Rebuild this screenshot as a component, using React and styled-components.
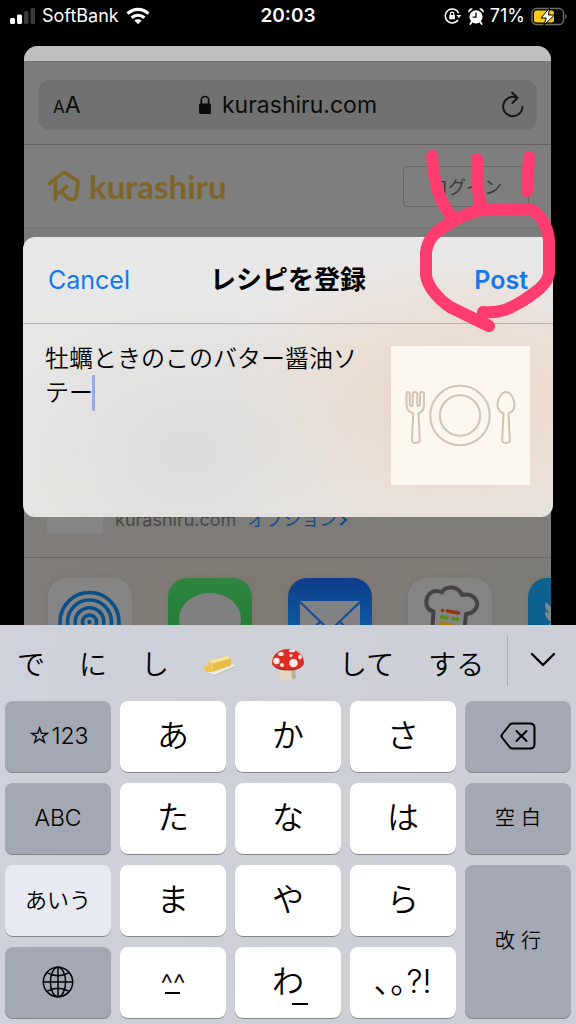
import React from "react";
import styled, { createGlobalStyle } from "styled-components";

const GlobalStyle = createGlobalStyle`
  * { box-sizing: border-box; }
  body { margin: 0; background: #000; }
  button, textarea { font: inherit; color: inherit; border: 0; background: none; padding: 0; margin: 0; }
`;

const Screen = styled.div`
  display: flex;
  flex-direction: column;
  height: 100vh;
  overflow: hidden;
  background: #000;
  color: #000;
  font-family: Inter, "Noto Sans CJK JP", sans-serif;
`;

/* Status bar */
const StatusBar = styled.header`
  display: grid;
  grid-template-columns: 1fr auto 1fr;
  align-items: center;
  height: 32px;
  padding: 0 8px;
  color: #fff;
  font-size: 18px;
  line-height: 32px;
`;
const StatusGroup = styled.div`
  display: flex;
  align-items: center;
  gap: ${(p) => p.$gap}px;
  justify-content: ${(p) => (p.$end ? "flex-end" : "flex-start")};
`;
const Clock = styled.time`
  font-weight: 600;
  font-size: 19px;
`;

/* Page behind the dialog */
const Stage = styled.main`
  display: grid;
  flex: 1 1 0;
  min-height: 0;
  overflow: hidden;
`;
const Sheet = styled.section`
  grid-area: 1 / 1;
  min-height: 0;
  min-width: 0;
  overflow: hidden;
  margin: 14px 25px 0 24px;
  border-radius: 14px 14px 0 0;
  background: #7e7e7e;
`;
const SheetTop = styled.div`
  height: 16px;
  background: #bfc0be;
  border-bottom: 1px solid #747474;
`;
const BrowserBar = styled.div`
  padding: 18px 14px 14px;
  background: #7c7c7c;
  border-bottom: 1px solid #626262;
`;
const AddressBox = styled.div`
  display: grid;
  grid-template-columns: 1fr auto 1fr;
  align-items: center;
  height: 50px;
  padding: 0 11px 0 15px;
  border-radius: 12px;
  background: #717171;
  font-size: 23px;
  color: #0c0c0c;
`;
const TextSize = styled.button`
  justify-self: start;
  display: flex;
  align-items: baseline;
  font-size: 23px;
`;
const SmallA = styled.span`
  font-size: 17px;
`;
const Address = styled.span`
  display: flex;
  align-items: center;
  gap: 10px;
  margin-right: 4px;
`;
const Reload = styled.button`
  justify-self: end;
  display: flex;
`;
const SiteHeader = styled.div`
  display: flex;
  align-items: center;
  justify-content: space-between;
  height: 83px;
  padding: 0 22px 0 23px;
  border-bottom: 1px solid #727272;
`;
const Logo = styled.a`
  display: flex;
  align-items: center;
  gap: 8px;
  color: #7d6628;
  text-decoration: none;
  font-family: Lato, sans-serif;
  font-weight: 700;
  font-size: 33px;
  line-height: 40px;
`;
const LoginButton = styled.button`
  && {
    width: 126px;
    height: 41px;
    border: 1px solid #686564;
    border-radius: 4px;
    color: #353535;
    font-size: 18px;
    font-weight: 350;
  }
`;
const SharePreview = styled.div`
  display: flex;
  align-items: flex-end;
  gap: 12px;
  padding: 250px 23px 23px;
  background: linear-gradient(#7b7b7b 200px, #807d79);
  border-bottom: 1px solid #676765;
  font-size: 18px;
  line-height: 28px;
  color: #484644;
`;
const PreviewIcon = styled.div`
  width: 56px;
  height: 56px;
  border-radius: 4px;
  background: #868583;
`;
const ShareSite = styled.span`
  display: flex;
  gap: 11px;
`;
const OptionsLink = styled.a`
  display: flex;
  align-items: center;
  gap: 2px;
  color: #124a8c;
  text-decoration: none;
`;
const AppRow = styled.div`
  display: flex;
  gap: 36px;
  padding: 20px 24px;
  background: linear-gradient(100deg, #807c78, #807a74 45%, #7d7c77);
`;
const AppTile = styled.button`
  && {
    flex: none;
    width: 84px;
    height: 84px;
    border-radius: 19px;
    overflow: hidden;
    background: ${(p) => p.$bg};
    box-shadow: 0 0 10px rgba(0, 0, 0, 0.06);
  }
  svg { display: block; }
`;

/* Dialog */
const Dialog = styled.section`
  grid-area: 1 / 1;
  align-self: start;
  position: relative;
  margin: 205px 23px 0;
  border-radius: 12px;
  background:
    radial-gradient(ellipse 200px 160px at 165px 215px, #dcdcda 0%, rgba(221, 221, 219, 0) 100%),
    radial-gradient(ellipse 250px 150px at 430px 165px, #ead8ca 0%, #ebdcd1 40%, rgba(233, 228, 224, 0) 100%),
    linear-gradient(#e8e8e9, #e8e6e2);
`;
const DialogHeader = styled.div`
  display: grid;
  grid-template-columns: 1fr auto 1fr;
  align-items: center;
  height: 87px;
  padding: 0 25px;
  border-bottom: 1px solid #b2b0af;
`;
const Title = styled.h1`
  margin: 0;
  font-size: 26px;
  font-weight: 600;
  line-height: 36px;
`;
const DialogAction = styled.button`
  && {
    justify-self: ${(p) => (p.$end ? "end" : "start")};
    color: #1478ea;
    font-size: 25px;
    font-weight: ${(p) => (p.$end ? 600 : 400)};
    line-height: 36px;
  }
`;
const DialogBody = styled.div`
  display: flex;
  justify-content: space-between;
  padding: 22px 23px 32px 22px;
`;
const Field = styled.label`
  position: relative;
  display: block;
`;
const RecipeText = styled.textarea`
  && {
    display: block;
    width: 322px;
    height: 120px;
    margin-top: -6px;
    resize: none;
    outline: none;
    overflow: hidden;
    font-family: "Noto Sans CJK JP", sans-serif;
    font-size: 24px;
    font-weight: 350;
    line-height: 34px;
  }
`;
const Caret = styled.span`
  position: absolute;
  left: 47px;
  top: 29px;
  width: 3px;
  height: 36px;
  border-radius: 1px;
  background: #9ba9e6;
`;
const Thumb = styled.div`
  width: 139px;
  height: 139px;
  background: #fcf8f0;
`;
const Marker = styled.svg`
  position: absolute;
  top: -97px;
  right: -7px;
  pointer-events: none;
`;

/* Keyboard */
const Keyboard = styled.section`
  flex: none;
  padding: 0 5px 5px;
  background: linear-gradient(100deg, #cfd1dc, #cdd0d6 40%, #cccfd8);
`;
const SuggestionBar = styled.div`
  display: flex;
  align-items: center;
  justify-content: space-between;
  height: 76px;
`;
const Suggestions = styled.div`
  display: flex;
  flex: 1 1 0;
  min-width: 0;
  align-items: center;
  gap: 34px;
  padding-left: 12px;
`;
const Suggestion = styled.button`
  && {
    display: flex;
    flex: none;
    font-family: "Noto Sans CJK JP", sans-serif;
    font-size: 28px;
    font-weight: 350;
    line-height: 40px;
  }
`;
const Expand = styled.button`
  && {
    display: flex;
    flex: none;
    justify-content: center;
    align-items: center;
    width: 64px;
    height: 51px;
    margin-bottom: 6px;
    padding-left: 6px;
    border-left: 1px solid #a9adb6;
  }
`;
const Keys = styled.div`
  display: grid;
  grid-template-columns: repeat(5, 1fr);
  grid-auto-rows: 72px;
  gap: 10px 9px;
`;
const tones = { white: "#fff", dark: "#a3a8b4", light: "#e7eaf0" };
const Key = styled.button`
  && {
    position: relative;
    display: flex;
    align-items: center;
    justify-content: center;
    gap: ${(p) => p.$gap || 0}px;
    grid-row: ${(p) => (p.$tall ? "span 2" : "auto")};
    border-radius: 8px;
    background: ${(p) => tones[p.$tone || "white"]};
    box-shadow: inset 0 -1px 0 #85878d;
    font-size: ${(p) => p.$size || 32}px;
    font-weight: 350;
    line-height: 36px;
    padding-bottom: 2px;
  }
`;
const Face = styled.span`
  display: flex;
  flex-direction: column;
  align-items: center;
  font-size: 28px;
  line-height: 28px;
  &::after {
    content: "";
    width: 15px;
    border-bottom: 2px solid #000;
    margin-top: -6px;
  }
`;
const Kana = styled.span`
  position: relative;
  &::after {
    content: "";
    position: absolute;
    right: -4px;
    bottom: -5px;
    width: 16px;
    border-bottom: 2px solid #000;
  }
`;

function Signal() {
  return (
    <svg width="27" height="18" viewBox="0 0 27 18">
      <rect x="2" y="11" width="5" height="6" rx="1.5" fill="#fff" />
      <rect x="9" y="7.500" width="5" height="9.500" rx="1.500" fill="#fff" />
      <rect x="16" y="4" width="4.500" height="13" rx="1.500" fill="#3a3a3a" />
      <rect x="22.500" y="1" width="4.500" height="16" rx="1.500" fill="#3a3a3a" />
    </svg>
  );
}
function Wifi() {
  return (
    <svg width="24" height="18" viewBox="0 0 24 18" fill="none" stroke="#fff" strokeWidth="3.2">
      <path d="M1.500 6.600C7.500 .9 16.500 .9 22.500 6.600" />
      <path d="M5.600 10.800C9.300 7.400 14.700 7.400 18.400 10.800" />
      <path d="M12 17.200l-3.600-3.700c2-1.800 5.200-1.800 7.200 0z" fill="#fff" stroke="none" />
    </svg>
  );
}
function RotationLock() {
  return (
    <svg width="18" height="16" viewBox="0 0 18 16" fill="none" stroke="#fff" strokeWidth="1.500">
      <path d="M14.700 5.200A7 7 0 1 0 14 12" />
      <path d="M12.500 7h4.700l-2.300 3.200z" fill="#fff" stroke="none" />
      <rect x="5.300" y="7" width="5.600" height="4.300" rx=".6" fill="#fff" stroke="none" />
      <path d="M6.500 7V5.700a1.600 1.600 0 0 1 3.200 0V7" strokeWidth="1.200" />
    </svg>
  );
}
function Alarm() {
  return (
    <svg width="16" height="17" viewBox="0 0 16 17">
      <circle cx="8" cy="8.800" r="6.600" fill="#fff" />
      <path d="M.6 4.700A3 3 0 0 1 4.800.8zM15.400 4.700A3 3 0 0 0 11.200.8z" fill="#fff" />
      <path d="M3.600 14l-1.300 2M12.400 14l1.300 2" stroke="#fff" strokeWidth="1.800" strokeLinecap="round" />
      <path d="M8 4.500v4.600H4.600" fill="none" stroke="#000" strokeWidth="1.300" />
    </svg>
  );
}
function Battery() {
  return (
    <svg width="37" height="19" viewBox="0 0 37 19">
      <rect x="1" y="1.500" width="31.500" height="16" rx="4.500" fill="none" stroke="#6b6b6b" strokeWidth="1.500" />
      <path d="M34.300 7v5c1.900-.6 1.900-4.400 0-5z" fill="#6b6b6b" />
      <rect x="3" y="3.500" width="20" height="12" rx="2.500" fill="#f7cb1b" />
      <path d="M18.500 1L10 11h5.300l-2.500 7.300L23.500 8h-6z" fill="#fff" stroke="#000" strokeWidth="1" />
    </svg>
  );
}
function HouseLogo() {
  return (
    <svg width="34" height="32" viewBox="0 0 34 32" fill="none" stroke="#7d6628" strokeWidth="3.600" strokeLinecap="round" strokeLinejoin="round">
      <path d="M2.500 13.500L15.500 3.300Q17 2.200 18.500 3.300L30 10.500Q31.300 11.500 31 13L29.300 25.500Q28.500 29.500 25 29.500Q21 29.500 18.500 26L14.500 21.500L19.500 16.500M8.500 12V29.500M8.500 24.500L14.500 21.500" />
    </svg>
  );
}
function AirDropArt() {
  return (
    <svg width="84" height="84" viewBox="0 0 84 84" fill="none" stroke="#075089" strokeWidth="3.600">
      <circle cx="41.500" cy="44" r="29.500" />
      <circle cx="41.500" cy="44" r="22" />
      <circle cx="41.500" cy="44" r="14.300" />
      <circle cx="41.500" cy="44" r="7" />
      <circle cx="41.500" cy="44" r="2.200" fill="#075089" stroke="none" />
    </svg>
  );
}
function BubbleArt() {
  return (
    <svg width="84" height="84" viewBox="0 0 84 84">
      <ellipse cx="42" cy="41" rx="31" ry="26" fill="#807f81" />
    </svg>
  );
}
function MailArt() {
  return (
    <svg width="84" height="84" viewBox="0 0 84 84">
      <rect x="12" y="23" width="60" height="40" fill="#828284" />
      <path d="M12 24L38 49Q42 53 46 49L72 24M13 62L33 43M71 62L51 43" fill="none" stroke="#154e92" strokeWidth="2.200" />
    </svg>
  );
}
function ChefArt() {
  return (
    <svg width="84" height="84" viewBox="0 0 84 84" fill="none" strokeLinecap="round">
      <path d="M24 56L25.500 33.500C14 31 17 12.500 29 13Q32 13 34 14.500C37 7.500 50 7.500 54 17C66 14.500 73 25 67 31.500Q64 35.500 58 36L56 56" stroke="#484144" strokeWidth="4" strokeLinejoin="round" />
      <path d="M34.500 32.500h.2M39.500 33L50.500 35" stroke="#93330f" strokeWidth="3.500" />
      <path d="M33.500 39L39 40M44.500 40.500L50 41.500" stroke="#58891f" strokeWidth="3.500" />
      <path d="M32.500 45.500L44 47" stroke="#aa7c16" strokeWidth="3.500" />
    </svg>
  );
}
function BirdArt() {
  return (
    <svg width="84" height="84" viewBox="0 0 84 84">
      <path d="M18 24C25 32 33 36 42 36C40 25 52 18 60 26L68 23L63 30L70 29L63 35C63 55 42 69 16 59Q27 58 31 54Q22 52 21 45H25Q17 41 17 34L22 35Q15 30 18 24Z" fill="#80878b" />
    </svg>
  );
}
function PlateArt() {
  return (
    <svg width="139" height="139" viewBox="0 0 139 139" fill="none" stroke="#d2c3b3" strokeWidth="2" strokeLinejoin="round">
      <circle cx="69" cy="69.500" r="29.800" />
      <circle cx="69" cy="69.500" r="20.200" />
      <path d="M15.500 48Q15.500 46 17 46T18.800 48V58Q18.800 60 20.300 60T21.800 58V48Q21.800 46 24 46T26.200 48V58Q26.200 60 27.500 60T29 58V48Q29 46 31 46T33 48V60Q33 65 27.500 67.500L28.700 94Q28.700 97 24.800 97T21 94L22.200 67.500Q15.500 65 15.500 59Z" />
      <path d="M115 46C120 46 123.500 54 123.500 59Q123.500 65 117.500 67.500L118.800 94Q118.800 97 115 97T111.200 94L112.500 67.500Q106.500 65 106.500 59C106.500 54 110 46 115 46Z" />
    </svg>
  );
}
function Butter() {
  return (
    <svg width="34" height="34" viewBox="0 0 34 34">
      <path d="M3 26L27 17L33 19.500L11 29Z" fill="#ececee" />
      <path d="M3 26L11 29L33 19.500V20.500L11 30.500Z" fill="#c0c1c4" />
      <path d="M5.500 15L23.700 10L28 12.300L10 17.500Z" fill="#fbe58c" />
      <path d="M5.500 15L10 17.500V26L5.500 23.500Z" fill="#f0c855" />
      <path d="M10 17.500L28 12.300V19.500L10 26Z" fill="#e8bd48" />
      <path d="M0 20.500L5.500 20L10 26L3 26Z" fill="#f1c63f" />
    </svg>
  );
}
function Mushroom() {
  return (
    <svg width="34" height="34" viewBox="0 0 34 34">
      <path d="M10 22L8.500 31.500Q10 34 17 34T25 31.500L24 22Z" fill="#e3d6c2" />
      <path d="M20 22L21 33.500Q24 33 25 31.500L24 22Z" fill="#bfae95" />
      <path d="M1 17C1 8 9 3 17 3S33 8 33 17C33 21 27 23.500 17 23.500S1 21 1 17Z" fill="#dd2e26" />
      <path d="M3 20.500Q17 26 31 20.500Q27 24.500 17 24.500T3 20.500Z" fill="#a31f1b" />
      <g fill="#fbe9e4">
        <circle cx="5.500" cy="15" r="3.200" />
        <ellipse cx="10" cy="8" rx="2.800" ry="2" />
        <ellipse cx="21" cy="4.800" rx="3.200" ry="1.500" />
        <circle cx="22.500" cy="17" r="4.300" />
        <circle cx="20" cy="9.500" r="1.500" />
        <ellipse cx="29" cy="11" rx="1.800" ry="2.400" />
        <circle cx="11" cy="19" r="2" />
      </g>
    </svg>
  );
}
function Globe() {
  return (
    <svg width="32" height="32" viewBox="0 0 32 32" fill="none" stroke="#000" strokeWidth="1.500">
      <circle cx="16" cy="16" r="14.700" />
      <ellipse cx="16" cy="16" rx="7.600" ry="14.700" />
      <path d="M16 1.300V30.700M1.300 16H30.700M4.800 6.700Q16 13 27.200 6.700M4.800 25.300Q16 19 27.200 25.300" />
    </svg>
  );
}
function Backspace() {
  return (
    <svg width="36" height="28" viewBox="0 0 36 28" fill="none" stroke="#000" strokeWidth="2" strokeLinecap="round" strokeLinejoin="round">
      <path d="M12.500 1.500H30Q34.500 1.500 34.500 6V22Q34.500 26.500 30 26.500H12.500Q11 26.500 10 25.500L2 15.500Q1 14 2 12.500L10 2.500Q11 1.500 12.500 1.500Z" />
      <path d="M16.500 9L26.500 19M26.500 9L16.500 19" />
    </svg>
  );
}

export default function App() {
  return (
    <Screen>
      <GlobalStyle />
      <StatusBar>
        <StatusGroup $gap={7}>
          <Signal />
          <span>SoftBank</span>
          <Wifi />
        </StatusGroup>
        <Clock>20:03</Clock>
        <StatusGroup $gap={6} $end>
          <RotationLock />
          <Alarm />
          <span>71%</span>
          <Battery />
        </StatusGroup>
      </StatusBar>

      <Stage>
        <Sheet>
          <SheetTop />
          <BrowserBar>
            <AddressBox>
              <TextSize><SmallA>A</SmallA>A</TextSize>
              <Address>
                <svg width="14" height="20" viewBox="0 0 14 20">
                  <rect x="1" y="8.500" width="12" height="10.500" rx="1.500" fill="#0c0c0c" />
                  <path d="M3.300 9V5.200a3.700 3.700 0 0 1 7.400 0V9" fill="none" stroke="#0c0c0c" strokeWidth="1.700" />
                </svg>
                kurashiru.com
              </Address>
              <Reload aria-label="Reload">
                <svg width="26" height="28" viewBox="0 0 26 28" fill="none" stroke="#161616" strokeWidth="2" strokeLinecap="round" strokeLinejoin="round">
                  <path d="M22.500 16A9.700 9.700 0 1 1 16.500 6.600M12 1.500L17.500 6.800L12.500 12" />
                </svg>
              </Reload>
            </AddressBox>
          </BrowserBar>
          <SiteHeader>
            <Logo href="#"><HouseLogo />kurashiru</Logo>
            <LoginButton>ログイン</LoginButton>
          </SiteHeader>
          <SharePreview>
            <PreviewIcon />
            <ShareSite>
              kurashiru.com
              <OptionsLink href="#">
                オプション
                <svg width="9" height="14" viewBox="0 0 9 14" fill="none" stroke="#124a8c" strokeWidth="2.200">
                  <path d="M1.500 2L7 7L1.500 12" />
                </svg>
              </OptionsLink>
            </ShareSite>
          </SharePreview>
          <AppRow>
            <AppTile aria-label="AirDrop" $bg="#868585"><AirDropArt /></AppTile>
            <AppTile aria-label="Messages" $bg="linear-gradient(#2f8540, #1c7a2c)"><BubbleArt /></AppTile>
            <AppTile aria-label="Mail" $bg="linear-gradient(#103c8a, #0b5ba0 60%)"><MailArt /></AppTile>
            <AppTile aria-label="Recipes" $bg="#858484"><ChefArt /></AppTile>
            <AppTile aria-label="Twitter" $bg="#0e618f"><BirdArt /></AppTile>
          </AppRow>
        </Sheet>

        <Dialog role="dialog" aria-labelledby="dialog-title">
          <DialogHeader>
            <DialogAction>Cancel</DialogAction>
            <Title id="dialog-title">レシピを登録</Title>
            <DialogAction $end>Post</DialogAction>
          </DialogHeader>
          <DialogBody>
            <Field>
              <RecipeText aria-label="レシピ" spellCheck={false} defaultValue="牡蠣ときのこのバター醤油ソテー" />
              <Caret />
            </Field>
            <Thumb><PlateArt /></Thumb>
          </DialogBody>
          <Marker width="150" height="200" viewBox="410 140 150 200" fill="none" stroke="#ff3b70" strokeWidth="12" strokeLinecap="round" strokeLinejoin="round">
            <path d="M432 156C434 182 438 200 452 217" />
            <path d="M477 159C477 176 478 192 480 205" />
            <path d="M529 157L527 191" />
            <path d="M489 326L450 307C438 299 427 286 426 275V253C427 240 434 232 450 223C468 212 480 209 497 209H525C540 209 548 228 549 240V273C548 284 536 292 524 300C512 307 502 314 483 312" />
          </Marker>
        </Dialog>
      </Stage>

      <Keyboard>
        <SuggestionBar>
          <Suggestions>
            <Suggestion>で</Suggestion>
            <Suggestion>に</Suggestion>
            <Suggestion>し</Suggestion>
            <Suggestion aria-label="バター"><Butter /></Suggestion>
            <Suggestion aria-label="きのこ"><Mushroom /></Suggestion>
            <Suggestion>して</Suggestion>
            <Suggestion>する</Suggestion>
          </Suggestions>
          <Expand aria-label="More">
            <svg width="26" height="16" viewBox="0 0 26 16" fill="none" stroke="#000" strokeWidth="2.400" strokeLinecap="round" strokeLinejoin="round">
              <path d="M2 2L13 13L24 2" />
            </svg>
          </Expand>
        </SuggestionBar>
        <Keys>
          <Key $tone="dark" $size={23}>☆123</Key>
          <Key>あ</Key>
          <Key>か</Key>
          <Key>さ</Key>
          <Key $tone="dark" aria-label="Delete"><Backspace /></Key>
          <Key $tone="dark" $size={23}>ABC</Key>
          <Key>た</Key>
          <Key>な</Key>
          <Key>は</Key>
          <Key $tone="dark" $size={20} $gap={6}><span>空</span><span>白</span></Key>
          <Key $tone="light" $size={22}>あいう</Key>
          <Key>ま</Key>
          <Key>や</Key>
          <Key>ら</Key>
          <Key $tone="dark" $size={20} $gap={6} $tall><span>改</span><span>行</span></Key>
          <Key $tone="dark" aria-label="Next keyboard"><Globe /></Key>
          <Key><Face>^^</Face></Key>
          <Key><Kana>わ</Kana></Key>
          <Key>､｡?!</Key>
        </Keys>
      </Keyboard>
    </Screen>
  );
}
